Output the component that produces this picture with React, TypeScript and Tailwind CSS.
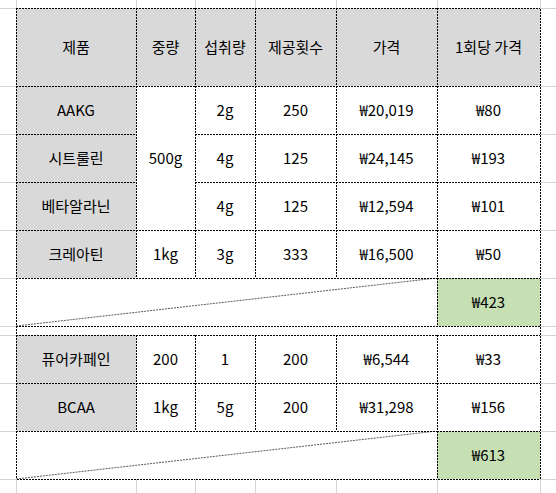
import clsx from "clsx"
import type { ReactNode } from "react"

type Edge = "n" | "g" | "d"

// Excel "hair" dotted border: 2px on, 1px off
const TOP: Record<Edge, string> = {
  n: "",
  g: "border-t border-t-[#d4d4d4]",
  d: "before:pointer-events-none before:absolute before:inset-x-0 before:top-0 before:h-px before:bg-[repeating-linear-gradient(90deg,#000_0_2px,transparent_2px_3px)]",
}

const LEFT: Record<Edge, string> = {
  n: "",
  g: "border-l border-l-[#d4d4d4]",
  d: "after:pointer-events-none after:absolute after:inset-y-0 after:left-0 after:w-px after:bg-[repeating-linear-gradient(180deg,#000_0_2px,transparent_2px_3px)]",
}

function Cell({
  t = "d",
  l = "d",
  className,
  children,
}: {
  t?: Edge
  l?: Edge
  className?: string
  children?: ReactNode
}) {
  return (
    <div className={clsx("relative flex items-center justify-center", TOP[t], LEFT[l], className)}>
      {children}
    </div>
  )
}

// merged cell with the diagonal slash (bottom-left to top-right)
function Slash() {
  return (
    <Cell className="col-span-5">
      <svg className="pointer-events-none absolute inset-0 h-full w-full" aria-hidden>
        <line x1="0" y1="100%" x2="100%" y2="0" stroke="#000" strokeOpacity="0.65" strokeWidth="1" strokeDasharray="2 1" />
      </svg>
    </Cell>
  )
}

const head = ["제품", "중량", "섭취량", "제공횟수", "가격", "1회당 가격"]

const label = "bg-[#d9d9d9]"
const total = "bg-[#c6e0b4]"

function Margin() {
  return <Cell t="g" l="n" />
}

function Edge() {
  return <Cell t="g" l="d" />
}

export default function App() {
  return (
    <div className="grid h-[493px] w-[556px] grid-cols-[16px_120px_59px_60px_81px_101px_103px_16px] grid-rows-[8px_78px_48px_48px_48px_48px_48px_9px_48px_48px_48px_14px] bg-white font-[family-name:Noto_Sans_CJK_KR,sans-serif] text-[15px] text-black">
      {/* top strip */}
      <Cell t="n" l="n" />
      {[0, 1, 2, 3, 4, 5, 6].map((i) => (
        <Cell key={i} t="n" l="g" />
      ))}

      {/* header */}
      <Margin />
      {head.map((h) => (
        <Cell key={h} className={label}>
          {h}
        </Cell>
      ))}
      <Edge />

      <Margin />
      <Cell className={label}>AAKG</Cell>
      <Cell className="row-span-3">500g</Cell>
      <Cell>2g</Cell>
      <Cell>250</Cell>
      <Cell>₩20,019</Cell>
      <Cell>₩80</Cell>
      <Edge />

      <Margin />
      <Cell className={label}>시트룰린</Cell>
      <Cell>4g</Cell>
      <Cell>125</Cell>
      <Cell>₩24,145</Cell>
      <Cell>₩193</Cell>
      <Edge />

      <Margin />
      <Cell className={label}>베타알라닌</Cell>
      <Cell>4g</Cell>
      <Cell>125</Cell>
      <Cell>₩12,594</Cell>
      <Cell>₩101</Cell>
      <Edge />

      <Margin />
      <Cell className={label}>크레아틴</Cell>
      <Cell>1kg</Cell>
      <Cell>3g</Cell>
      <Cell>333</Cell>
      <Cell>₩16,500</Cell>
      <Cell>₩50</Cell>
      <Edge />

      <Margin />
      <Slash />
      <Cell className={total}>₩423</Cell>
      <Edge />

      {/* spacer row */}
      <Margin />
      <Cell className="col-span-6" />
      <Edge />

      <Margin />
      <Cell className={label}>퓨어카페인</Cell>
      <Cell>200</Cell>
      <Cell>1</Cell>
      <Cell>200</Cell>
      <Cell>₩6,544</Cell>
      <Cell>₩33</Cell>
      <Edge />

      <Margin />
      <Cell className={label}>BCAA</Cell>
      <Cell>1kg</Cell>
      <Cell>5g</Cell>
      <Cell>200</Cell>
      <Cell>₩31,298</Cell>
      <Cell>₩156</Cell>
      <Edge />

      <Margin />
      <Slash />
      <Cell className={total}>₩613</Cell>
      <Edge />

      {/* bottom strip */}
      <Margin />
      {[0, 1, 2, 3, 4, 5].map((i) => (
        <Cell key={i} t="d" l="g" />
      ))}
      <Cell t="g" l="g" />
    </div>
  )
}
